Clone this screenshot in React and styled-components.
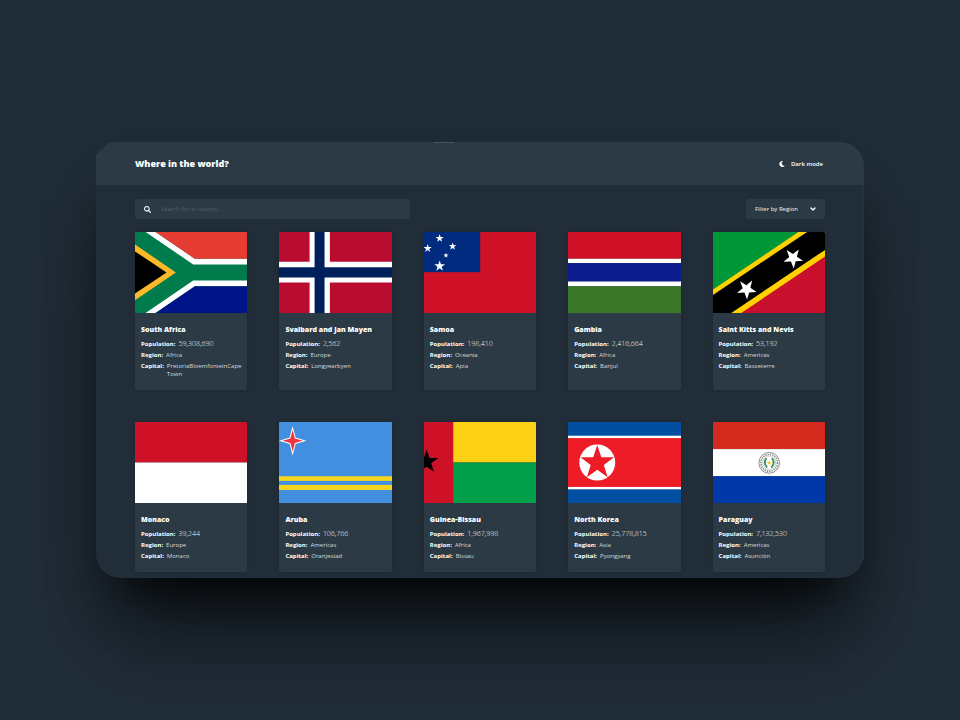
import React from 'react';
import styled, { createGlobalStyle } from 'styled-components';
import { FaMoon, FaSearch } from 'react-icons/fa';
import { ChevronDown } from 'lucide-react';

const GlobalStyle = createGlobalStyle`
  *, *::before, *::after { box-sizing: border-box; }
  body {
    margin: 0;
    background: #202c37;
    color: #fff;
    font-family: "Open Sans", "Noto Sans", sans-serif;
    font-size: 6px;
    line-height: 8px;
  }
`;

const Page = styled.div`
  min-height: 100vh;
  display: flex;
  align-items: center;
  justify-content: center;
  overflow: hidden;
`;

const Window = styled.div`
  position: relative;
  width: 80%;
  overflow: hidden;
  background: #212d38;
  border-radius: 13px 24px 24px 24px;
  box-shadow: 0 70px 90px -20px rgba(0, 0, 0, 0.55), 0 36px 50px -24px rgba(0, 0, 0, 0.85);
`;

const Glint = styled.span`
  position: absolute;
  top: 0;
  left: 44%;
  width: 20px;
  height: 1px;
  background: #40585f;
`;

const Header = styled.header`
  height: 43px;
  padding: 0 41px 0 39px;
  display: flex;
  align-items: center;
  justify-content: space-between;
  background: #2c3a45;
  clip-path: polygon(0 13px, 14px 0, 100% 0, 100% 100%, 0 100%);
`;

const Title = styled.h1`
  margin: 0;
  font-size: 9px;
  line-height: 12px;
  font-weight: 800;
`;

const ModeButton = styled.button`
  display: flex;
  align-items: center;
  gap: 6px;
  padding: 0;
  border: 0;
  background: none;
  color: #fff;
  font: inherit;
  font-weight: 600;
  cursor: pointer;
`;

const Main = styled.main`
  padding: 14px 37px 6px 39px;
  border-right: 2px solid #26333e;
`;

const Toolbar = styled.div`
  display: flex;
  justify-content: space-between;
  margin-bottom: 13px;
`;

const SearchBox = styled.label`
  flex: 0 1 275px;
  height: 20px;
  padding: 0 9px;
  display: flex;
  align-items: center;
  gap: 10px;
  border-radius: 2px;
  background: #2c3a45;
`;

const SearchInput = styled.input`
  flex: 1;
  min-width: 0;
  padding: 0;
  border: 0;
  outline: 0;
  background: none;
  color: #fff;
  font: inherit;
  &::placeholder { color: #52616d; opacity: 1; }
`;

const Filter = styled.div`
  position: relative;
  width: 79px;
  & > svg {
    position: absolute;
    right: 8px;
    top: 6px;
    pointer-events: none;
  }
`;

const FilterSelect = styled.select`
  width: 100%;
  height: 20px;
  padding: 0 18px 0 9px;
  appearance: none;
  border: 0;
  border-radius: 2px;
  background: #2c3a45;
  color: #f3f5f6;
  font: inherit;
`;

const Grid = styled.div`
  display: grid;
  grid-template-columns: repeat(5, 1fr);
  gap: 32px;
`;

const Card = styled.article`
  min-width: 0;
  overflow: hidden;
  border-radius: 1px 1px 2px 2px;
  background: #2c3a45;
  box-shadow: 0 0 4px rgba(0, 0, 0, 0.16);
`;

const FlagArt = styled.svg`
  display: block;
  width: 100%;
  height: 81px;
`;

const CardBody = styled.div`
  padding: 11px 2px 12px 6px;
`;

const Name = styled.h2`
  margin: 0 0 4px;
  font-size: 7px;
  line-height: 12px;
  font-weight: 800;
  white-space: nowrap;
`;

const Facts = styled.dl`
  margin: 0;
  display: grid;
  gap: 3px;
`;

const Fact = styled.div`
  display: flex;
  gap: 3px;
`;

const Label = styled.dt`
  font-weight: 700;
`;

const Value = styled.dd`
  margin: 0;
  min-width: 0;
  color: ${(p) => (p.$numeric ? '#f3f5f6' : '#d5dadd')};
  font-size: ${(p) => (p.$numeric ? 7 : 6)}px;
  font-weight: ${(p) => (p.$numeric ? 300 : 400)};
`;

function Star({ x, y, r, turn = 0, fill = '#fff' }) {
  const points = Array.from({ length: 10 }, (_, i) => {
    const radius = i % 2 ? r * 0.39 : r;
    const a = ((i * 36 - 90 + turn) * Math.PI) / 180;
    return `${(x + radius * Math.cos(a)).toFixed(1)},${(y + radius * Math.sin(a)).toFixed(1)}`;
  }).join(' ');
  return <polygon points={points} fill={fill} />;
}

const Band = ({ y, h, fill }) => <rect x="-4" y={y} width="346" height={h} fill={fill} />;

const flags = {
  za: (
    <>
      <Band y={0} h={242} fill="#007c4c" />
      <path d="M32 0H62L180 80H342V97H175ZM32 242H62L180 162H342V145H175Z" fill="#fff" />
      <path d="M62 0L180 80H342V0Z" fill="#e63d32" />
      <path d="M62 242L180 162H342V242Z" fill="#001489" />
      <path d="M0 37L123 121L0 204Z" fill="#fdb927" />
      <path d="M0 58L95 121L0 184Z" fill="#000" />
    </>
  ),
  sj: (
    <>
      <Band y={0} h={242} fill="#ba0c2f" />
      <path d="M92 0H153V89H342V151H153V242H92V151H0V89H92Z" fill="#fff" />
      <path d="M107 0H137V105H342V136H137V242H107V136H0V105H107Z" fill="#00205b" />
    </>
  ),
  ws: (
    <>
      <Band y={0} h={242} fill="#ce1126" />
      <rect width="169" height="120" fill="#002b7f" />
      <Star x={47} y={19} r={13} />
      <Star x={11} y={49} r={13} />
      <Star x={86} y={43} r={12} />
      <Star x={66} y={70} r={8} />
      <Star x={47} y={102} r={17} />
    </>
  ),
  gm: (
    <>
      <Band y={0} h={80} fill="#ce1126" />
      <Band y={80} h={13} fill="#fff" />
      <Band y={93} h={55} fill="#0c1c8c" />
      <Band y={148} h={14} fill="#fff" />
      <Band y={162} h={80} fill="#3a7728" />
    </>
  ),
  kn: (
    <>
      <Band y={0} h={242} fill="#ffd100" />
      <path d="M0 0H257L0 172Z" fill="#009739" />
      <path d="M85 242L342 70V242Z" fill="#c8102e" />
      <path d="M0 188L283 0H342V50L55 242H0Z" fill="#000" />
      <Star x={241} y={78} r={31} turn={33} />
      <Star x={101} y={171} r={31} turn={33} />
    </>
  ),
  mc: (
    <>
      <Band y={0} h={121} fill="#ce1126" />
      <Band y={121} h={121} fill="#fff" />
    </>
  ),
  aw: (
    <>
      <Band y={0} h={242} fill="#418fde" />
      <Band y={162} h={14} fill="#f5d51e" />
      <Band y={188} h={15} fill="#f5d51e" />
      <path
        d="M41 18L49 48L77 56L49 64L41 94L33 64L5 56L33 48Z"
        fill="#ef3340"
        stroke="#fff"
        strokeWidth="3"
      />
    </>
  ),
  gw: (
    <>
      <Band y={0} h={121} fill="#fcd116" />
      <Band y={121} h={121} fill="#009e49" />
      <rect x="-4" width="92" height="242" fill="#ce1126" />
      <Star x={8} y={119} r={37} fill="#000" />
    </>
  ),
  kp: (
    <>
      <Band y={0} h={242} fill="#024fa2" />
      <Band y={41} h={160} fill="#fff" />
      <Band y={48} h={146} fill="#ed1c27" />
      <circle cx="88" cy="121" r="54" fill="#fff" />
      <Star x={88} y={122} r={53} fill="#ed1c27" />
    </>
  ),
  py: (
    <>
      <Band y={0} h={81} fill="#d52b1e" />
      <Band y={81} h={81} fill="#fff" />
      <Band y={162} h={80} fill="#0038a8" />
      <circle cx="169" cy="122" r="31" fill="#fff" stroke="#555" strokeWidth="2" />
      <circle cx="169" cy="122" r="25" fill="none" stroke="#8a8a8a" strokeWidth="5" strokeDasharray="4 3" />
      <circle cx="169" cy="122" r="20" fill="#fff" stroke="#777" strokeWidth="1" />
      <path d="M161 108Q149 122 163 136M177 108Q189 122 175 136" fill="none" stroke="#3f9765" strokeWidth="6" />
      <Star x={169} y={122} r={8} fill="#f2c230" />
    </>
  ),
};

const countries = [
  { code: 'za', name: 'South Africa', population: '59,308,690', region: 'Africa', capital: 'PretoriaBloemfonteinCape Town' },
  { code: 'sj', name: 'Svalbard and Jan Mayen', population: '2,562', region: 'Europe', capital: 'Longyearbyen' },
  { code: 'ws', name: 'Samoa', population: '198,410', region: 'Oceania', capital: 'Apia' },
  { code: 'gm', name: 'Gambia', population: '2,416,664', region: 'Africa', capital: 'Banjul' },
  { code: 'kn', name: 'Saint Kitts and Nevis', population: '53,192', region: 'Americas', capital: 'Basseterre' },
  { code: 'mc', name: 'Monaco', population: '39,244', region: 'Europe', capital: 'Monaco' },
  { code: 'aw', name: 'Aruba', population: '106,766', region: 'Americas', capital: 'Oranjestad' },
  { code: 'gw', name: 'Guinea-Bissau', population: '1,967,998', region: 'Africa', capital: 'Bissau' },
  { code: 'kp', name: 'North Korea', population: '25,778,815', region: 'Asia', capital: 'Pyongyang' },
  { code: 'py', name: 'Paraguay', population: '7,132,530', region: 'Americas', capital: 'Asunción' },
];

function CountryCard({ country }) {
  return (
    <Card>
      <FlagArt viewBox="0 0 338 242" preserveAspectRatio="none" aria-hidden="true">
        {flags[country.code]}
      </FlagArt>
      <CardBody>
        <Name>{country.name}</Name>
        <Facts>
          <Fact>
            <Label>Population:</Label>
            <Value $numeric>{country.population}</Value>
          </Fact>
          <Fact>
            <Label>Region:</Label>
            <Value>{country.region}</Value>
          </Fact>
          <Fact>
            <Label>Capital:</Label>
            <Value>{country.capital}</Value>
          </Fact>
        </Facts>
      </CardBody>
    </Card>
  );
}

export default function App() {
  return (
    <>
      <GlobalStyle />
      <Page>
        <Window>
          <Header>
            <Title>Where in the world?</Title>
            <ModeButton type="button">
              <FaMoon size={6} aria-hidden="true" />
              Dark mode
            </ModeButton>
          </Header>
          <Glint />
          <Main>
            <Toolbar>
              <SearchBox>
                <FaSearch size={7} aria-hidden="true" />
                <SearchInput type="text" aria-label="Search for a country" placeholder="Search for a country..." />
              </SearchBox>
              <Filter>
                <FilterSelect aria-label="Filter by Region" defaultValue="">
                  <option value="">Filter by Region</option>
                  <option>Africa</option>
                  <option>Americas</option>
                  <option>Asia</option>
                  <option>Europe</option>
                  <option>Oceania</option>
                </FilterSelect>
                <ChevronDown size={8} strokeWidth={4} aria-hidden="true" />
              </Filter>
            </Toolbar>
            <Grid>
              {countries.map((country) => (
                <CountryCard key={country.code} country={country} />
              ))}
            </Grid>
          </Main>
        </Window>
      </Page>
    </>
  );
}
